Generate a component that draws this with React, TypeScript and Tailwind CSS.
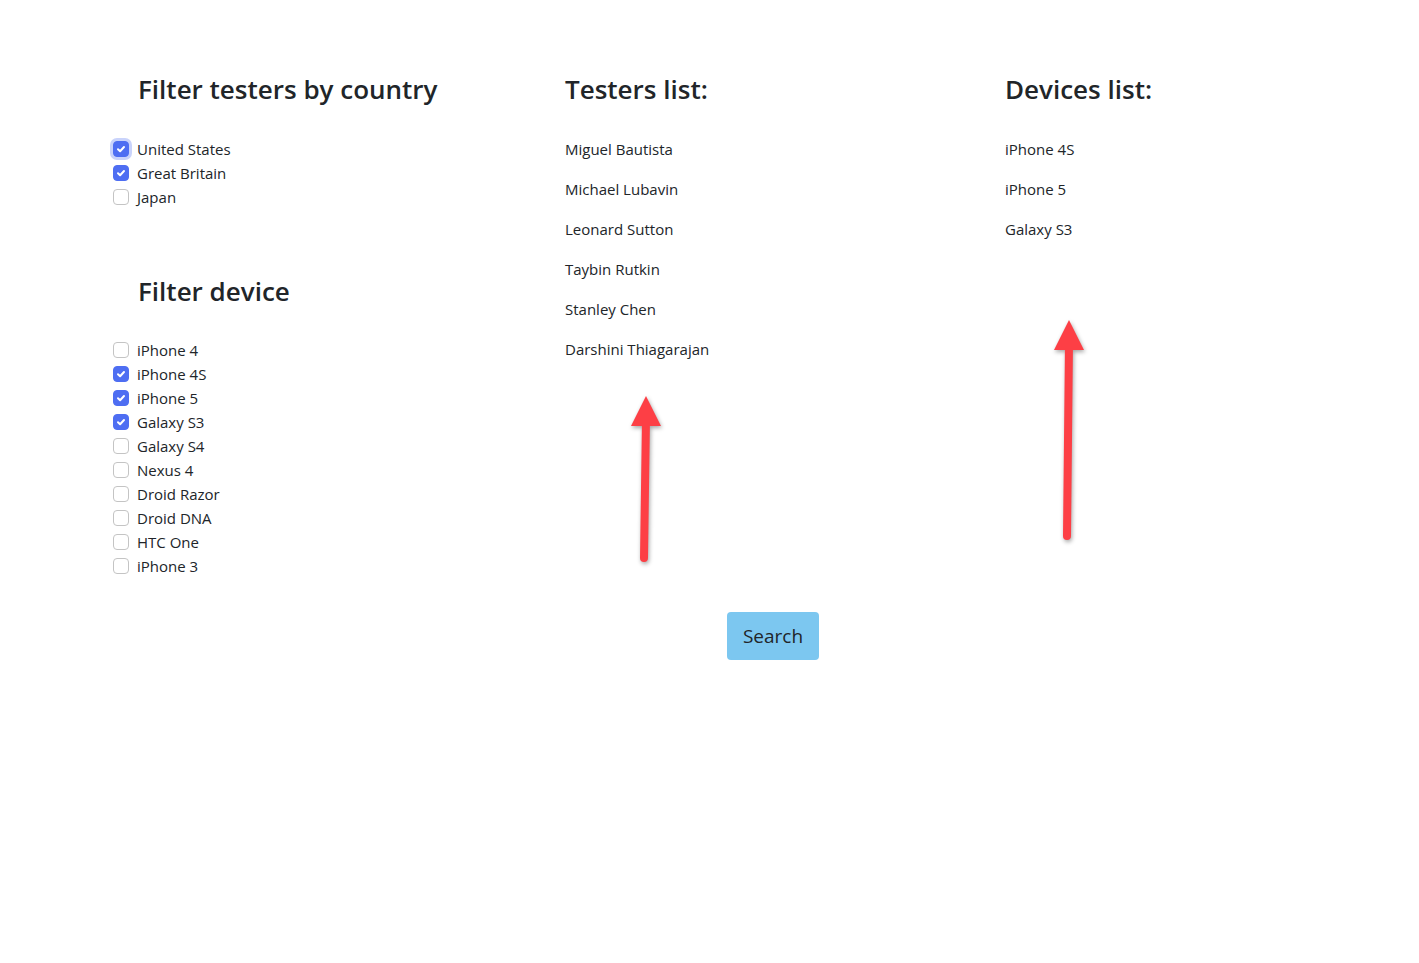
const countries = [
  { name: 'United States', checked: true, focus: true },
  { name: 'Great Britain', checked: true },
  { name: 'Japan', checked: false },
];

const devices = [
  { name: 'iPhone 4', checked: false },
  { name: 'iPhone 4S', checked: true },
  { name: 'iPhone 5', checked: true },
  { name: 'Galaxy S3', checked: true },
  { name: 'Galaxy S4', checked: false },
  { name: 'Nexus 4', checked: false },
  { name: 'Droid Razor', checked: false },
  { name: 'Droid DNA', checked: false },
  { name: 'HTC One', checked: false },
  { name: 'iPhone 3', checked: false },
];

const testers = [
  'Miguel Bautista',
  'Michael Lubavin',
  'Leonard Sutton',
  'Taybin Rutkin',
  'Stanley Chen',
  'Darshini Thiagarajan',
];

const deviceList = ['iPhone 4S', 'iPhone 5', 'Galaxy S3'];

const Check = ({ checked, focus }: { checked: boolean; focus?: boolean }) => (
  <span
    className={
      'flex h-4 w-4 shrink-0 items-center justify-center rounded-[4px] border ' +
      (checked ? 'border-[#4e6ef2] bg-[#4e6ef2] ' : 'border-[#c4c4c4] bg-white ') +
      (focus ? 'ring-[3px] ring-[#c9d3fb]' : '')
    }
  >
    {checked && (
      <svg width="10" height="10" viewBox="0 0 10 10" fill="none">
        <path d="M2 5.2 L4.1 7.2 L8 3" stroke="white" strokeWidth="2" strokeLinecap="round" strokeLinejoin="round" />
      </svg>
    )}
  </span>
);

const CheckRow = ({ name, checked, focus }: { name: string; checked: boolean; focus?: boolean }) => (
  <label className="flex h-6 items-center gap-2">
    <Check checked={checked} focus={focus} />
    <span>{name}</span>
  </label>
);

const Arrow = ({ className, height }: { className: string; height: number }) => (
  <svg
    className={'absolute ' + className}
    width="40"
    height={height + 10}
    viewBox={`0 0 40 ${height + 10}`}
    style={{ filter: 'drop-shadow(1px 2px 2px rgba(0,0,0,0.35))' }}
  >
    <line x1="19" y1={height - 4} x2="21" y2="26" stroke="#fd3f45" strokeWidth="8" strokeLinecap="round" />
    <polygon points={`21,4 36,34 6,34`} fill="#fd3f45" />
  </svg>
);

export default function App() {
  return (
    <div
      className="relative min-h-screen bg-white text-[15px] text-[#212529]"
      style={{ fontFamily: '"Open Sans", "Noto Sans", sans-serif' }}
    >
      <div className="flex pl-[113px] pt-[72px]">
        <div className="w-[452px]">
          <h2 className="ml-[25px] text-[26px] font-semibold leading-[34px]">Filter testers by country</h2>
          <div className="mt-[31px] flex flex-col">
            {countries.map((c) => (
              <CheckRow key={c.name} {...c} />
            ))}
          </div>
          <h2 className="ml-[25px] mt-[65px] text-[26px] font-semibold leading-[34px]">Filter device</h2>
          <div className="mt-[30px] flex flex-col">
            {devices.map((d) => (
              <CheckRow key={d.name} {...d} />
            ))}
          </div>
        </div>
        <div className="w-[440px]">
          <h2 className="text-[26px] font-semibold leading-[34px]">Testers list:</h2>
          <ul className="mt-[31px] flex flex-col gap-4">
            {testers.map((t) => (
              <li key={t} className="leading-6">{t}</li>
            ))}
          </ul>
        </div>
        <div>
          <h2 className="text-[26px] font-semibold leading-[34px]">Devices list:</h2>
          <ul className="mt-[31px] flex flex-col gap-4">
            {deviceList.map((d) => (
              <li key={d} className="leading-6">{d}</li>
            ))}
          </ul>
        </div>
      </div>
      <div className="mt-[34px] pl-[727px]">
        <button className="h-12 w-[92px] rounded-[4px] bg-[#7cc7f0] text-[19px] text-[#212529]">Search</button>
      </div>
      <Arrow className="left-[625px] top-[392px]" height={170} />
      <Arrow className="left-[1048px] top-[316px]" height={224} />
    </div>
  );
}
